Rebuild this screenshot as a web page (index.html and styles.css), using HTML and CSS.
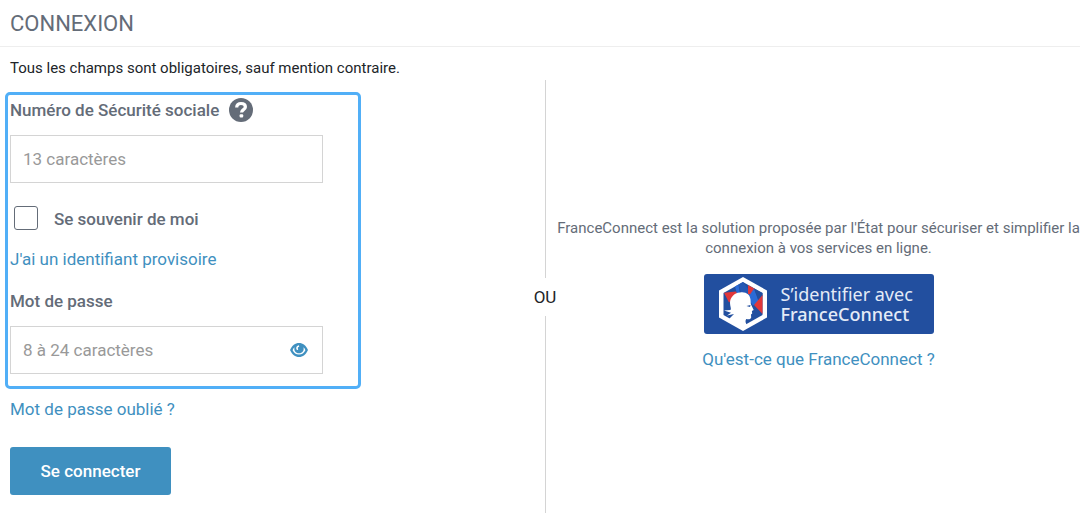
FILE: index.html
```html
<!DOCTYPE html>
<html lang="fr">
<head>
  <meta charset="UTF-8" />
  <meta name="viewport" content="width=device-width, initial-scale=1.0" />
  <title>Connexion</title>
  <link rel="stylesheet" href="styles.css">
</head>
<body>

  <header class="header">
    <h1>CONNEXION</h1>
  </header>

  <p class="intro">Tous les champs sont obligatoires, sauf mention contraire.</p>

  <main class="columns">
    <form class="login">
      <div class="fields">
        <div class="label-row">
          <label for="nir">Numéro de Sécurité sociale</label>
          <button class="help" type="button" aria-label="Aide">
            <svg viewBox="0 0 24 24" width="24" height="24">
              <circle cx="12" cy="12" r="12" fill="#646c78" />
              <path d="M7.700 9.500C7.700 6.900 9.500 5.500 12 5.500c2.600 0 4.400 1.300 4.400 3.400 0 2.700-3.900 2.700-3.900 5.600" fill="none" stroke="#fff" stroke-width="3.200" />
              <rect x="10.600" y="16.200" width="3.600" height="3.400" rx="1" fill="#fff" />
            </svg>
          </button>
        </div>
        <input class="text" type="text" id="nir" placeholder="13 caractères">

        <div class="remember">
          <input type="checkbox" id="remember">
          <label for="remember">Se souvenir de moi</label>
        </div>

        <a class="temp" href="#">J'ai un identifiant provisoire</a>

        <label class="pass-label" for="password">Mot de passe</label>
        <div class="password">
          <input class="text" type="password" id="password" placeholder="8 à 24 caractères">
          <button class="eye" type="button" aria-label="Afficher le mot de passe">
            <svg viewBox="0 0 18 14" width="18" height="14">
              <path d="M0 7C2 2.500 5.200 0 9 0s7 2.500 9 7c-2 4.500-5.200 7-9 7S2 11.500 0 7z" fill="#3f90c0" />
              <path d="M2.600 7.200C4 10 6 11.500 9 11.500s5-1.500 6.400-4.300c-.4-1.300-1-2.300-1.900-3C14.200 7.800 12.500 10.200 9 10.200S3.800 7.800 4.500 4.200c-.9.700-1.500 1.700-1.900 3z" fill="#fff" />
              <path d="M8.400 3.200C7 3.800 6.600 5 7.400 6.200" fill="none" stroke="#fff" stroke-width="1.600" stroke-linecap="round" />
            </svg>
          </button>
        </div>
      </div>

      <a class="forgot" href="#">Mot de passe oublié ?</a>
      <button class="submit" type="submit">Se connecter</button>
    </form>

    <div class="divider"><span>OU</span></div>

    <section class="france">
      <p>FranceConnect est la solution proposée par l'État pour sécuriser et simplifier la connexion à vos services en ligne.</p>
      <button class="fc-button" type="button">
        <svg viewBox="0 0 50 54" width="50" height="54">
          <path d="M25 0l24 13.500v27L25 54 1 40.500v-27z" fill="#fff" />
          <path d="M25 5l19.500 11v22L25 49 5.500 38V16z" fill="#224f9f" />
          <path d="M6 15.700l12-1.200 3 3-10 8z" fill="#e1373a" />
          <path d="M17 9.500l3.500-2L22 17l-3 0z" fill="#2b6bd6" />
          <path d="M20.500 7.500L25 5l8 11-9 3z" fill="#2558b4" />
          <path d="M30 8l7 4-3 6-4-1z" fill="#e1373a" />
          <path d="M36 11.500l5 14-6 3-8-11 5 0z" fill="#2b6bd6" />
          <path d="M36 11.500l8.500 4.500v3l-4 4z" fill="#224f9f" />
          <path d="M44.500 18v19L36 28z" fill="#e1373a" />
          <path d="M22 15.500c6-1 10 2 10.500 7l.3 4.500 2.900 6-1.800 1 .3 2.500-1.200 1 .2 3c-.6 2-3 2-5 1.500-1.200 2.200-.8 4 .8 6L25 50 11 42l5-5-7 1.500 4-2.800-7-2.200 6.500-.5c1-1.500-.5-3.500-.5-7 0-5.500 4-10 10-10.500z" fill="#fff" />
          <path d="M32.500 28l-4 1 3.500 1z" fill="#224f9f" />
        </svg>
        <span class="fc-text">
          <span>S’identifier avec</span>
          <b>FranceConnect</b>
        </span>
      </button>
      <a href="#">Qu'est-ce que FranceConnect ?</a>
    </section>
  </main>

</body>
</html>
```
FILE: styles.css
```css
* {
  box-sizing: border-box;
}
body {
  display: flex;
  flex-direction: column;
  min-height: 100vh;
  margin: 0;
  background: #fff;
  color: #212529;
  font-family: Roboto, sans-serif;
  font-size: 17px;
  line-height: 24px;
}
h1, p {
  margin: 0;
}
button {
  padding: 0;
  border: 0;
  background: none;
  font: inherit;
  cursor: pointer;
}
svg {
  display: block;
}
a {
  color: #3f90c0;
  text-decoration: none;
}
label {
  color: #646c78;
  font-weight: 500;
}
.header {
  padding: 12px 10px 10px;
  border-bottom: 1px solid #eee;
}
h1 {
  color: #646c78;
  font-size: 22px;
  font-weight: 400;
  line-height: 24px;
}
.intro {
  padding: 11px 10px 0;
  font-size: 15px;
  line-height: 20px;
}
.columns {
  display: grid;
  flex: 1;
  grid-template-columns: 1fr 24px 1fr;
  padding-left: 10px;
  margin-top: 2px;
}
.login {
  display: flex;
  flex-direction: column;
  align-items: flex-start;
  padding-top: 12px;
}
.fields {
  display: flex;
  flex-direction: column;
  align-items: flex-start;
  width: 356px;
  max-width: 100%;
  margin-left: -5px;
  padding: 3px 35px 12px 2px;
  border: 3px solid #51aff7;
  border-radius: 5px;
}
.label-row {
  display: flex;
  gap: 10px;
  align-items: center;
}
.text {
  width: 100%;
  height: 48px;
  margin-top: 13px;
  padding: 0 12px;
  border: 1px solid #d4d4d4;
  background: #fff;
  font: inherit;
}
.text::placeholder {
  color: #999;
}
.remember {
  display: flex;
  gap: 16px;
  align-items: center;
  margin: 22px 0 16px 4px;
}
.remember input {
  appearance: none;
  width: 24px;
  height: 24px;
  margin: 0;
  border: 1px solid #646c78;
  border-radius: 3px;
}
.remember label {
  padding-top: 2px;
}
.pass-label {
  margin-top: 18px;
}
.password {
  position: relative;
  width: 100%;
}
.password .text {
  padding-right: 44px;
}
.eye {
  position: absolute;
  right: 15px;
  bottom: 17px;
}
.forgot {
  margin-top: 8px;
}
.submit {
  width: 161px;
  height: 48px;
  margin-top: 26px;
  border-radius: 3px;
  background: #3f90c0;
  color: #fff;
  font-weight: 500;
}
.divider {
  display: flex;
  flex-direction: column;
  gap: 7px;
  align-items: center;
}
.divider::before, .divider::after {
  flex: 1;
  width: 1px;
  background: #d4d4d4;
  content: "";
}
.france {
  display: flex;
  flex-direction: column;
  align-items: center;
  justify-content: center;
  padding-bottom: 4px;
  text-align: center;
}
.france p {
  color: #646c78;
  font-size: 15px;
  line-height: 20px;
}
.fc-button {
  display: flex;
  gap: 13px;
  align-items: center;
  width: 230px;
  height: 60px;
  margin: 16px 0 13px;
  padding-left: 14px;
  border-radius: 3px;
  background: #224f9f;
  color: #e4ebf7;
  font-family: "Noto Sans", sans-serif;
  font-size: 18px;
  line-height: 20px;
  text-align: left;
}
.fc-text {
  display: grid;
}
.fc-button b {
  font-weight: 500;
}
```
